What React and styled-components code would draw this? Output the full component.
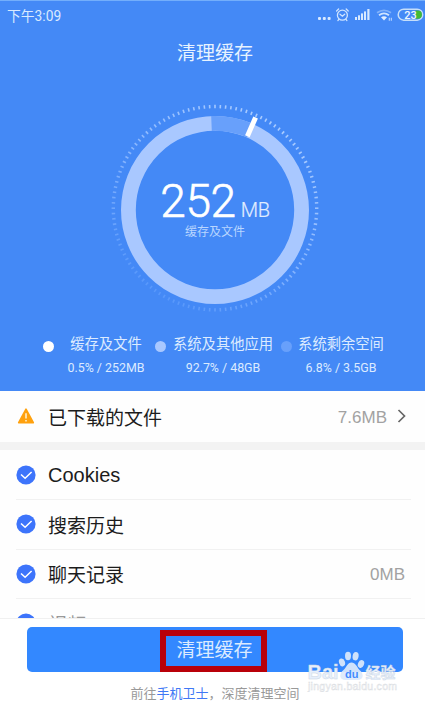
import styled, { createGlobalStyle } from 'styled-components';

const legend = [
  { id: 1, name: '缓存及文件', value: '0.5% / 252MB', color: '#ffffff', gap: 16, width: 72 },
  { id: 2, name: '系统及其他应用', value: '92.7% / 48GB', color: '#a9c8ff', gap: 7, width: 100 },
  { id: 3, name: '系统剩余空间', value: '6.8% / 3.5GB', color: '#68a0fb', gap: 6, width: 86 },
];

const items = [
  { id: 1, name: 'Cookies', latin: true },
  { id: 2, name: '搜索历史' },
  { id: 3, name: '聊天记录', size: '0MB' },
  { id: 4, name: '视频', faded: true },
];

const ticks = Array.from({ length: 120 }, (_, i) => i * 3);

const App = () => {
  return (
    <Screen>
      <GlobalStyle />
      <Hero>
        <StatusBar>
          <span>下午3:09</span>
          <StatusIcons />
        </StatusBar>
        <Title>清理缓存</Title>
        <Gauge>
          <Ring />
          <GaugeText>
            <Amount>
              252<small>MB</small>
            </Amount>
            <Caption>缓存及文件</Caption>
          </GaugeText>
        </Gauge>
        <Legend>
          {legend.map((el) => (
            <LegendItem key={el.id} $gap={el.gap}>
              <Dot $color={el.color} />
              <LegendText $width={el.width}>
                <div>{el.name}</div>
                <p>{el.value}</p>
              </LegendText>
            </LegendItem>
          ))}
        </Legend>
      </Hero>

      <Downloads>
        <WarningIcon />
        <Name>已下载的文件</Name>
        <Size>7.6MB</Size>
        <Arrow />
      </Downloads>
      <List>
        {items.map((item) => (
          <Row key={item.id}>
            <CheckIcon />
            <Name $latin={item.latin} $faded={item.faded}>
              {item.name}
            </Name>
            {item.size && <Size>{item.size}</Size>}
          </Row>
        ))}
      </List>

      <Footer>
        <Button>
          <Highlight>清理缓存</Highlight>
        </Button>
        <Hint>
          前往<a>手机卫士</a>，深度清理空间
        </Hint>
        <Watermark />
      </Footer>
    </Screen>
  );
};
export default App;

const StatusIcons = () => (
  <svg width='108' height='16' viewBox='317 7 108 16' fill='none'>
    <g fill='#d8e9ff'>
      <rect x='318' y='17' width='3' height='3' rx='1' />
      <rect x='322.8' y='17' width='3' height='3' rx='1' />
      <rect x='327.6' y='17' width='3' height='3' rx='1' />
      <rect x='355' y='17' width='2' height='3' />
      <rect x='358' y='15.3' width='2' height='4.7' />
      <rect x='361' y='13.4' width='2' height='6.6' />
      <rect x='364' y='11.4' width='2' height='8.6' />
      <rect x='367.3' y='9' width='2.2' height='11' />
    </g>
    <g stroke='#cfe4ff' strokeWidth='1.3' strokeLinecap='round'>
      <circle cx='342.4' cy='15.2' r='5' />
      <path d='M340 14.2l2.4 2 2.3-2M336.6 11l2-2M348.2 11l-2-2M338.8 19.4l-.9 1.2M346 19.4l.9 1.2' />
    </g>
    <g stroke='#cfe4ff' strokeWidth='1.8'>
      <path d='M377 12.8q7-5 14 0' opacity='.45' />
      <path d='M379 15.3q5-3.8 10 0' />
    </g>
    <path d='M381 17.3q3-2.2 6 0l-3 3.2z' fill='#e2efff' />
    <path d='M389.3 17.8v3M391.3 17.8v3' stroke='#bcd8ff' strokeWidth='1.1' />
    <rect x='398.2' y='9.2' width='24.5' height='11' rx='5.5' stroke='#c5defa' strokeWidth='1.5' />
    <path d='M415.5 10.6h2.3a4.1 4.1 0 0 1 0 8.2h-2.3z' fill='#42ba35' />
    <text x='404.2' y='18.8' fontFamily='Roboto, sans-serif' fontSize='11' fontWeight='500' fill='#ecf5ff'>23</text>
  </svg>
);

const Ring = () => (
  <svg width='212' height='212' viewBox='-106 -106 212 212'>
    <defs>
      <linearGradient id='fade' gradientUnits='userSpaceOnUse' x1='60' y1='-90' x2='-60' y2='90'>
        <stop offset='0' stopColor='#aaccff' />
        <stop offset='.5' stopColor='#88b6ff' />
        <stop offset='1' stopColor='#5596fb' />
      </linearGradient>
    </defs>
    <g stroke='url(#fade)' strokeWidth='1.6'>
      {ticks.map((a) => {
        const x = Math.sin((a * Math.PI) / 180);
        const y = -Math.cos((a * Math.PI) / 180);
        return <path key={a} d={`M${x * 100} ${y * 100 - 1.8}L${x * 103.4} ${y * 103.4 - 1.8}`} />;
      })}
    </g>
    <circle r='86.6' fill='none' stroke='#a9c8ff' strokeWidth='14.8' />
    <path d='M-3.5 -86.5A86.6 86.6 0 0 1 35 -79.2' fill='none' stroke='#68a0fb' strokeWidth='14.8' />
    <path d='M0 -80.5V-101' stroke='#fff' strokeWidth='5' transform='rotate(23.7)' />
  </svg>
);

const WarningIcon = () => (
  <svg width='20' height='20' viewBox='0 0 20 20'>
    <path d='M10 3.1L17.3 16.7H2.7z' fill='#ffa10e' stroke='#ffa10e' strokeWidth='1.6' strokeLinejoin='round' />
    <path d='M10 7.3v5.2M10 14v1.5' stroke='#fff3d8' strokeWidth='1.5' />
  </svg>
);

const CheckIcon = () => (
  <svg width='20' height='20' viewBox='0 0 20 20' fill='none'>
    <circle cx='10' cy='10' r='9.6' fill='#3d74fb' />
    <path d='M5 9.5l4.1 3.8L15.6 7' stroke='#fff' strokeWidth='1.5' />
  </svg>
);

const Arrow = () => (
  <svg width='10' height='16' viewBox='0 0 10 16' fill='none'>
    <path d='M1.5 2L7.5 8L1.5 14' stroke='#666' strokeWidth='1.7' />
  </svg>
);

const Watermark = () => (
  <Mark>
    <svg width='96' height='42' viewBox='306 650 96 42'>
      <g fill='#dce9fb' fillOpacity='.92'>
        <ellipse cx='342' cy='662.4' rx='3' ry='4' transform='rotate(-18 342 662.4)' />
        <ellipse cx='348' cy='656' rx='3' ry='4.2' />
        <ellipse cx='355.6' cy='656.2' rx='3' ry='4.2' transform='rotate(10 355.6 656.2)' />
        <ellipse cx='361' cy='664' rx='3' ry='4' transform='rotate(24 361 664)' />
        <path d='M351.5 662.5c4 0 5 4 8 7.5 5 4 4 10-2 10h-12c-6 0-7-6-2-10c3-2.5 4-7.5 8-7.5z' />
      </g>
      <g fontFamily='"Liberation Sans", "Noto Sans CJK SC", sans-serif' stroke='#ccd6e4' strokeWidth='.4' fill='#e6effc'>
        <text x='307.5' y='678.7' fontSize='20' fontWeight='700' textLength='31' lengthAdjust='spacingAndGlyphs'>Bai</text>
        <text x='345' y='678' fontSize='11' fontWeight='700' fill='#438cff' stroke='none'>du</text>
        <text x='365.5' y='678' fontSize='15' fontWeight='700' textLength='30'>经验</text>
        <text x='308' y='690' fontSize='10.5' textLength='89' fill='#f6f7f9' stroke='#d9dce1'>jingyan.baidu.com</text>
      </g>
    </svg>
  </Mark>
);

const GlobalStyle = createGlobalStyle`
  * {
    box-sizing: border-box;
  }
  body {
    margin: 0;
    background: #fff;
    font-family: Roboto, 'Noto Sans CJK SC', sans-serif;
  }
  svg {
    display: block;
    flex-shrink: 0;
  }
`;

const Screen = styled.div`
  display: flex;
  flex-direction: column;
  width: 425px;
  height: 705px;
  overflow: hidden;
  background: #fefefe;
`;

const Hero = styled.section`
  height: 391px;
  flex-shrink: 0;
  background: #4489f6;
  border-top: 1px solid #73aefb;
  color: #fff;
`;

const StatusBar = styled.div`
  display: flex;
  justify-content: space-between;
  height: 30px;
  padding: 6px 0 0 7px;
  color: #d9eaff;
  font-size: 13.8px;
  line-height: 18px;
`;

const Title = styled.h1`
  margin: 9px 0 0 0;
  padding-left: 5px;
  text-align: center;
  font-size: 19px;
  font-weight: 400;
  line-height: 28px;
  color: #e7f3ff;
`;

const Gauge = styled.div`
  display: grid;
  justify-content: center;
  margin-top: 36px;
  padding-left: 5px;
  height: 212px;

  > * {
    grid-area: 1 / 1;
  }
`;

const GaugeText = styled.div`
  padding-top: 72px;
  text-align: center;
`;

const Amount = styled.div`
  height: 48px;
  font-size: 46px;
  font-weight: 300;
  line-height: 50px;
  letter-spacing: -0.3px;
  -webkit-text-stroke: 0.6px #fff;

  small {
    margin-left: 5px;
    font-size: 20px;
    color: #e0edff;
    -webkit-text-stroke: 0.2px #e0edff;
  }
`;

const Caption = styled.div`
  margin-top: 1px;
  font-size: 12px;
  line-height: 14px;
  color: #b9d6ff;
`;

const Legend = styled.div`
  display: flex;
  gap: 13px;
  margin-top: 16px;
  padding-left: 43px;
`;

const LegendItem = styled.div`
  display: flex;
  gap: ${(props) => props.$gap}px;

  &:last-child {
    margin-left: -5px;
  }
`;

const Dot = styled.i`
  width: 11px;
  height: 11px;
  margin-top: 9px;
  border-radius: 50%;
  background: ${(props) => props.$color};
`;

const LegendText = styled.div`
  width: ${(props) => props.$width}px;
  white-space: nowrap;
  text-align: center;
  font-size: 14.3px;
  line-height: 24px;
  color: #dcebff;

  p {
    margin: 0 -5px;
    font-size: 12.4px;
  }
`;

const Row = styled.div`
  display: flex;
  align-items: center;
  height: 49.5px;
  flex-shrink: 0;
  margin: 0 14px 0 16px;
  padding-right: 6px;
  border-bottom: 1px solid #f1f1f1;
`;

const Downloads = styled(Row)`
  height: 58.5px;
  margin: 0;
  padding: 0 18px 0 16px;
  border-bottom: 8px solid #f3f3f3;
`;

const Name = styled.div`
  flex: 1;
  margin-left: 12px;
  padding-top: ${(props) => (props.$latin ? 1 : 5)}px;
  font-family: 'Liberation Sans', 'Noto Sans CJK SC', sans-serif;
  font-size: ${(props) => (props.$latin ? 20 : 19)}px;
  line-height: 28px;
  color: ${(props) => (props.$faded ? '#999' : '#1c1c1c')};
`;

const Size = styled.div`
  padding-top: 3px;
  font-family: 'Liberation Sans', sans-serif;
  font-size: 17px;
  color: #a2a2a2;

  & + svg {
    margin-left: 10px;
  }
`;

const List = styled.div`
  height: 168px;
  flex-shrink: 0;
  padding-top: 1px;
  overflow: hidden;
`;

const Footer = styled.footer`
  position: relative;
  flex: 1;
  padding: 8px 22px 0 27px;
  border-top: 1px solid #f0f0f0;
  background: #fff;
`;

const Button = styled.button`
  display: flex;
  align-items: center;
  justify-content: center;
  width: 100%;
  height: 45px;
  padding: 3px 3px 0 0;
  border: none;
  border-radius: 5px;
  background: #3388ff;
  font-family: inherit;
`;

const Highlight = styled.span`
  width: 107px;
  height: 42px;
  padding-left: 2px;
  border: 6px solid #b90009;
  font-size: 19px;
  line-height: 30px;
  color: #dcebff;
`;

const Hint = styled.div`
  margin-top: 12px;
  text-align: center;
  font-size: 13px;
  line-height: 20px;
  color: #999;

  a {
    color: #4078f5;
  }
`;

const Mark = styled.div`
  position: absolute;
  right: 23px;
  bottom: 13px;
`;
